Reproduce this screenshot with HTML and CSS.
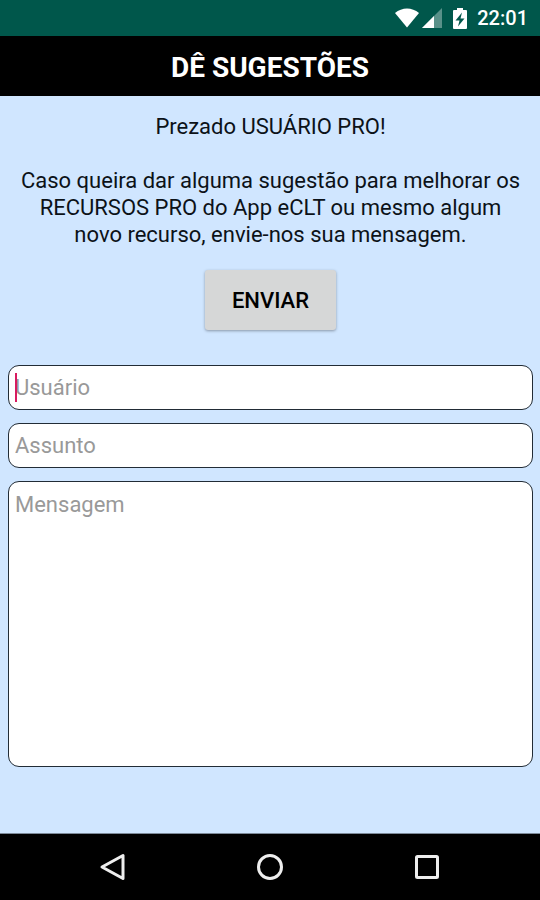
FILE: index.html
```html
<!DOCTYPE html>
<html lang="pt-BR">

<head>
   <meta charset="UTF-8">
   <meta name="viewport" content="width=device-width, initial-scale=1.0">
   <title>Dê Sugestões</title>
   <link rel="stylesheet" href="styles.css">
</head>

<body>
   <div class="status-bar">
      <svg class="wifi-icon" width="26" height="20" viewBox="0 0 26 20">
         <path d="M1 5 C8 -1 18 -1 25 5 L13 19.500 Z" fill="#fff"/>
      </svg>
      <svg class="signal-icon" width="20" height="20" viewBox="0 0 20 20">
         <path d="M0 20 L20 0 V20 Z" fill="#fff" fill-opacity="0.35"/>
         <path d="M0 20 L12 8 V20 Z" fill="#fff"/>
      </svg>
      <svg class="battery-icon" width="14" height="21" viewBox="0 0 14 21">
         <path d="M4 0 H10 V2 H13 Q14 2 14 3 V20 Q14 21 13 21 H1 Q0 21 0 20 V3 Q0 2 1 2 H4 Z" fill="#fff"/>
         <path d="M9 4.500 L2.500 12.500 H6.500 L5 18.500 L11.500 10.500 H7.500 Z" fill="#00574b"/>
      </svg>
      <span class="clock">22:01</span>
   </div>

   <header class="title-bar">
      <h1 class="title">DÊ SUGESTÕES</h1>
   </header>

   <main class="content">
      <p class="text">Prezado USUÁRIO PRO!</p>
      <p class="text">Caso queira dar alguma sugestão para melhorar os RECURSOS PRO do App eCLT ou mesmo algum novo recurso, envie-nos sua mensagem.</p>

      <form class="form" onsubmit="return false;">
         <button type="submit" class="send-btn">ENVIAR</button>

         <div class="field">
            <input type="text" class="box" placeholder="Usuário" aria-label="Usuário">
            <span class="cursor"></span>
         </div>
         <div class="field">
            <input type="text" class="box" placeholder="Assunto" aria-label="Assunto">
         </div>
         <div class="field message">
            <textarea class="box" placeholder="Mensagem" aria-label="Mensagem"></textarea>
         </div>
      </form>
   </main>

   <nav class="nav-bar">
      <button type="button" class="nav-btn" aria-label="Voltar">
         <svg width="28" height="28" viewBox="0 0 28 28">
            <path d="M24 2.500 V25.500 L3 14 Z"/>
         </svg>
      </button>
      <button type="button" class="nav-btn" aria-label="Início">
         <svg width="28" height="28" viewBox="0 0 28 28">
            <circle cx="14" cy="14" r="11.500"/>
         </svg>
      </button>
      <button type="button" class="nav-btn" aria-label="Recentes">
         <svg width="28" height="28" viewBox="0 0 28 28">
            <rect x="3.500" y="3.500" width="21" height="21" rx="1"/>
         </svg>
      </button>
   </nav>
</body>

</html>
```

FILE: styles.css
```css
* {
   box-sizing: border-box;
}

body {
   margin: 0;
   min-height: 100vh;
   display: flex;
   flex-direction: column;
   background-color: #d0e6ff;
   color: #0c1218;
   font-family: Roboto, "Liberation Sans", sans-serif;
   font-size: 22px;
   line-height: 27px;
}

.status-bar {
   display: flex;
   align-items: center;
   justify-content: flex-end;
   height: 36px;
   padding-right: 12px;
   background-color: #00574b;
   color: white;
}

.signal-icon {
   margin-left: 2px;
}

.battery-icon {
   margin-left: 11px;
}

.clock {
   margin-left: 10px;
   font-size: 20px;
   font-weight: 500;
}

.title-bar {
   padding: 18px 8px 15px;
   background-color: black;
   color: white;
   text-align: center;
}

.title {
   margin: 0;
   font-size: 28px;
   font-weight: bold;
   line-height: 27px;
}

.content {
   flex: 1;
   display: flex;
   flex-direction: column;
   padding: 17px 7px 66px 8px;
   border-bottom: 1px solid #7d8a99;
}

.text {
   margin: 0 0 27px;
   padding: 0 6px;
   text-align: center;
}

.form {
   flex: 1;
   display: flex;
   flex-direction: column;
   gap: 13px;
   margin-top: -5px;
}

.send-btn {
   align-self: center;
   width: 131px;
   height: 60px;
   margin-bottom: 22px;
   border: none;
   border-radius: 3px;
   background-color: #d6d7d7;
   box-shadow: 0 1px 3px rgba(0, 0, 0, 0.35);
   color: black;
   font-family: inherit;
   font-size: 22px;
   font-weight: 500;
   cursor: pointer;
}

.field {
   position: relative;
   display: flex;
}

.message {
   flex: 1;
}

.box {
   width: 100%;
   height: 45px;
   padding: 9px 6px;
   border: 1px solid #222c36;
   border-radius: 11px;
   outline: none;
   background-color: white;
   color: black;
   font: inherit;
   resize: none;
}

.message .box {
   height: auto;
}

.box::placeholder {
   color: #999;
}

/* pink cursor of the active field */
.cursor {
   position: absolute;
   top: 8px;
   left: 7px;
   width: 2px;
   height: 29px;
   background-color: #d81b60;
}

.nav-bar {
   display: flex;
   justify-content: center;
   gap: 129px;
   padding: 19px 0;
   background-color: black;
}

.nav-btn {
   display: flex;
   padding: 0;
   border: none;
   background: transparent;
   cursor: pointer;
}

.nav-btn svg {
   fill: none;
   stroke: #eee;
   stroke-width: 3;
   stroke-linejoin: round;
}
```
